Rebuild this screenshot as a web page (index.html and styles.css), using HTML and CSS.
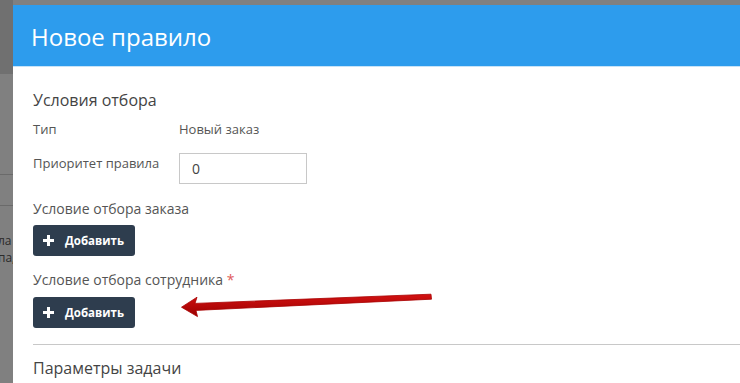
FILE: index.html
```html
<!DOCTYPE html>
<html lang="ru">
<head>
<meta charset="utf-8">
<link rel="stylesheet" href="styles.css">
</head>
<body>
<div class="page">
  <div class="page-row r1"></div>
  <div class="page-row r2"></div>
  <div class="page-text">
    <div>ла</div>
    <div>па,</div>
  </div>
</div>

<div class="modal">
  <div class="modal-header">
    <h1 class="modal-title">Новое правило</h1>
  </div>
  <div class="modal-body">
    <h2 class="section-title">Условия отбора</h2>
    <div class="field">
      <div class="label">Тип</div>
      <div class="value">Новый заказ</div>
    </div>
    <div class="field field-input">
      <div class="label">Приоритет правила</div>
      <div class="input">0</div>
    </div>
    <div class="group">
      <div class="group-label">Условие отбора заказа</div>
      <button class="btn"><span class="plus"></span>Добавить</button>
    </div>
    <div class="group">
      <div class="group-label">Условие отбора сотрудника <span class="req">*</span></div>
      <button class="btn"><span class="plus"></span>Добавить</button>
    </div>
    <hr class="divider">
    <h2 class="section-title">Параметры задачи</h2>
  </div>
</div>

<svg class="arrow" width="740" height="383" viewBox="0 0 740 383">
  <defs>
    <linearGradient id="ag" x1="0" y1="0" x2="0" y2="1">
      <stop offset="0" stop-color="#d41212"/>
      <stop offset="1" stop-color="#9a0000"/>
    </linearGradient>
  </defs>
  <path d="M431 294.2 L195 303.4 L197 297.2 L181.5 307.2 L197.5 316.6 L196 310.4 L431.5 299.2 Z" fill="url(#ag)" stroke="#a80000" stroke-width="0.8" stroke-linejoin="round"/>
</svg>
</body>
</html>
```

FILE: styles.css
```css
html, body {
  margin: 0;
  padding: 0;
}
body {
  width: 740px;
  height: 383px;
  overflow: hidden;
  background: #808080;
  font-family: "Open Sans", "Liberation Sans", sans-serif;
  position: relative;
}
.page {
  width: 13px;
  height: 383px;
  overflow: hidden;
  display: flex;
  flex-direction: column;
  background: linear-gradient(#707070 0 74px, #808080 74px);
}
.page-row {
  flex: none;
  height: 0;
  border-top: 1px solid #6a6a6a;
}
.r1 { margin-top: 174px; }
.r2 { margin-top: 30px; }
.page-text {
  margin-top: 26px;
  font-size: 12px;
  line-height: 17px;
  color: #2a2a2a;
  white-space: nowrap;
  margin-left: -2px;
}

.modal {
  position: absolute;
  left: 13px;
  top: 5px;
  right: 0;
  bottom: 0;
  background: #fff;
}
.modal-header {
  height: 62px;
  background: #2d9ced;
  border-bottom: 1px solid #c7e3f8;
  display: flex;
  align-items: center;
  padding-left: 18px;
  box-sizing: border-box;
}
.modal-title {
  margin: 0;
  font-weight: 400;
  font-size: 24px;
  color: #fff;
  position: relative;
  top: 1px;
}
.modal-body {
  padding: 22px 0 0 20px;
  color: #555;
}
.section-title {
  margin: 0;
  font-weight: 400;
  font-size: 16px;
  line-height: 22px;
  color: #444;
}
.field {
  display: flex;
  font-size: 13px;
  line-height: 17px;
  color: #555;
  margin-top: 10px;
}
.label {
  width: 146px;
}
.field-input {
  margin-top: 15px;
}
.field-input .label {
  padding-top: 2px;
}
.input {
  width: 128px;
  height: 31px;
  box-sizing: border-box;
  border: 1px solid #c8c8c8;
  font-size: 14px;
  line-height: 29px;
  padding-left: 12px;
  color: #444;
}
.group {
  margin-top: 15px;
}
.group + .group {
  margin-top: 14px;
}
.group-label {
  font-size: 14px;
  line-height: 20px;
  color: #555;
}
.req {
  color: #e05a5a;
}
.btn {
  margin-top: 6px;
  display: flex;
  align-items: center;
  width: 102px;
  height: 31px;
  border: 0;
  border-radius: 3px;
  background: #2e3d4e;
  color: #fff;
  font-family: "Open Sans", "Liberation Sans", sans-serif;
  font-weight: 700;
  font-size: 11.5px;
  padding: 0 0 0 10px;
  cursor: pointer;
}
.group + .group .btn {
  margin-top: 7px;
}
.plus {
  width: 11px;
  height: 11px;
  margin-right: 11px;
  background:
    linear-gradient(#fff, #fff) center / 11px 3px no-repeat,
    linear-gradient(#fff, #fff) center / 3px 11px no-repeat;
}
.divider {
  margin: 16px 0 0 0;
  border: 0;
  border-top: 1px solid #c8c8c8;
  height: 0;
}
.divider + .section-title {
  margin-top: 12px;
}
.arrow {
  position: absolute;
  left: 0;
  top: 0;
  pointer-events: none;
}
```
